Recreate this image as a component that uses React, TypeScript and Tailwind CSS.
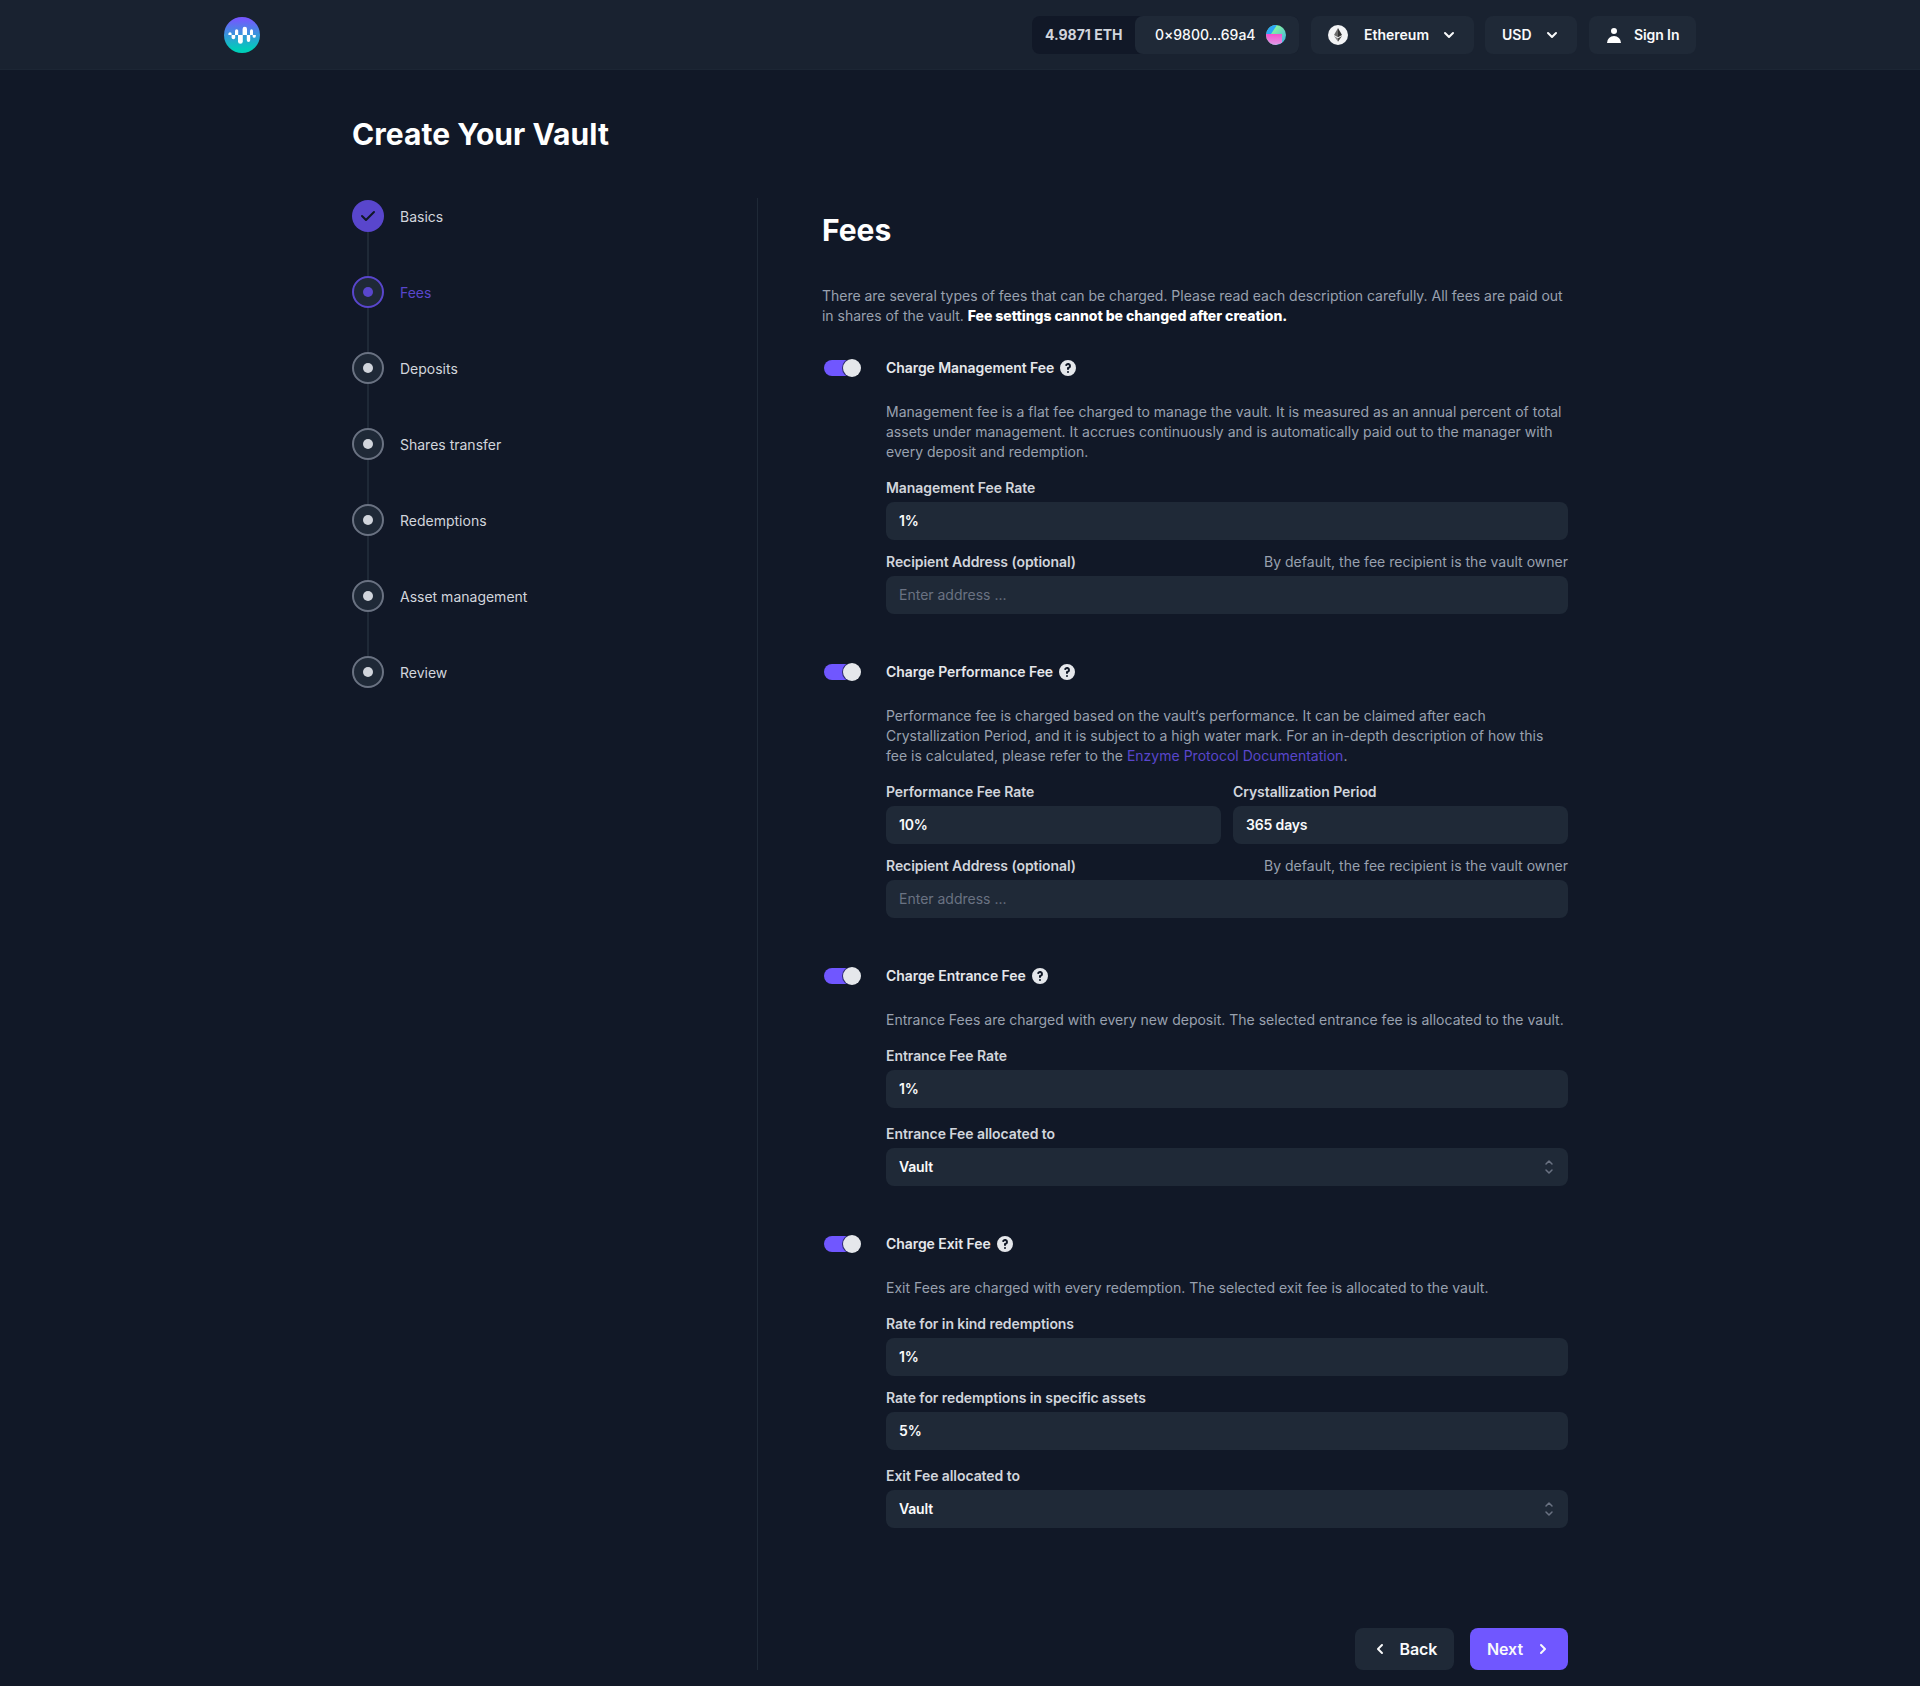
import type { ReactNode } from "react";

const steps = ["Basics", "Fees", "Deposits", "Shares transfer", "Redemptions", "Asset management", "Review"];

function Chevron({ className, d }: { className: string; d: string }) {
  return (
    <svg viewBox="0 0 20 20" fill="currentColor" className={className}>
      <path fillRule="evenodd" clipRule="evenodd" d={d} />
    </svg>
  );
}

const DOWN =
  "M5.293 7.293a1 1 0 011.414 0L10 10.586l3.293-3.293a1 1 0 111.414 1.414l-4 4a1 1 0 01-1.414 0l-4-4a1 1 0 010-1.414z";
const LEFT =
  "M12.707 5.293a1 1 0 010 1.414L9.414 10l3.293 3.293a1 1 0 01-1.414 1.414l-4-4a1 1 0 010-1.414l4-4a1 1 0 011.414 0z";
const RIGHT =
  "M7.293 14.707a1 1 0 010-1.414L10.586 10 7.293 6.707a1 1 0 011.414-1.414l4 4a1 1 0 010 1.414l-4 4a1 1 0 01-1.414 0z";
const CHECK =
  "M16.707 5.293a1 1 0 010 1.414l-8 8a1 1 0 01-1.414 0l-4-4a1 1 0 011.414-1.414L8 12.586l7.293-7.293a1 1 0 011.414 0z";
const HELP =
  "M18 10a8 8 0 11-16 0 8 8 0 0116 0zm-8-3a1 1 0 00-.867.5 1 1 0 11-1.731-1A3 3 0 0113 8a3.001 3.001 0 01-2 2.83V11a1 1 0 11-2 0v-1a1 1 0 011-1 1 1 0 100-2zm0 8a1 1 0 100-2 1 1 0 000 2z";

function Logo() {
  return (
    <svg viewBox="0 0 36 36" className="h-9 w-9">
      <defs>
        <linearGradient id="logo" x1="0" y1="0" x2="0" y2="1">
          <stop offset="0.05" stopColor="#7558ff" />
          <stop offset="0.9" stopColor="#00cdb9" />
        </linearGradient>
      </defs>
      <circle cx="18" cy="18" r="18" fill="url(#logo)" />
      <g fill="#fff">
        <path d="M4.4 18v-1.2a1.6 1.6 0 013.2 0V18z" />
        <path d="M7.6 18h3.6v2.4a1.8 1.8 0 01-3.6 0z" />
        <path d="M11 18v-4.2a1.6 1.6 0 013.2 0V18z" />
        <path d="M14 18h4.8v6.4a2.4 2.4 0 01-4.8 0z" />
        <path d="M18.6 18v-6a2.2 2.2 0 014.4 0v6z" />
        <path d="M22.8 18h3.4v5.2a1.7 1.7 0 01-3.4 0z" />
        <path d="M26 18v-4.3a1.5 1.5 0 013 0V18z" />
        <path d="M28.6 18h3.2v1.2a1.6 1.6 0 01-3.2 0z" />
      </g>
    </svg>
  );
}

function Avatar() {
  return (
    <svg viewBox="0 0 20 20" className="ml-[11px] h-5 w-5">
      <defs>
        <clipPath id="avatar">
          <circle cx="10" cy="10" r="10" />
        </clipPath>
        <linearGradient id="mint" x1="0" y1="0" x2="1" y2="1">
          <stop offset="0.3" stopColor="#86f3a0" />
          <stop offset="0.9" stopColor="#41b4e0" />
        </linearGradient>
        <linearGradient id="pink" x1="0" y1="0" x2="0" y2="1">
          <stop offset="0" stopColor="#f750cf" />
          <stop offset="1" stopColor="#dc9ae6" />
        </linearGradient>
      </defs>
      <g clipPath="url(#avatar)">
        <rect width="20" height="20" fill="url(#mint)" />
        <path d="M0 0h11L5 9H0z" fill="#2ba6f7" />
        <path d="M0 9h16v9l-6 2H0z" fill="url(#pink)" />
      </g>
    </svg>
  );
}

function EthIcon() {
  return (
    <svg viewBox="0 0 20 20" className="h-5 w-5">
      <circle cx="10" cy="10" r="10" fill="#f3f4f6" />
      <path d="M10 3L6 10.1l4 2.2z" fill="#6b6b6b" />
      <path d="M10 3l4 7.1-4 2.2z" fill="#343434" />
      <path d="M6 11l4 5.8v-3.5z" fill="#8c8c8c" />
      <path d="M14 11l-4 5.8v-3.5z" fill="#4a4a4a" />
    </svg>
  );
}

function Header() {
  const button = "flex h-[38px] items-center rounded-lg bg-[#1f2937] text-sm font-semibold text-gray-50";
  return (
    <header className="flex h-[70px] items-center justify-between border-b border-[#1f2937]/50 bg-[#192230] pr-56 pl-56">
      <Logo />
      <div className="flex text-sm">
        <div className="flex h-[38px] w-[267px] items-center rounded-lg bg-[#111827]">
          <span className="w-[103px] pl-[13px] font-bold text-gray-300">4.9871 ETH</span>
          <button className="flex h-[38px] w-[164px] items-center rounded-lg bg-[#1f2937] pl-5 font-medium tracking-[-0.03px] text-gray-50">
            0×9800...69a4
            <Avatar />
          </button>
        </div>
        <button className={`${button} ml-3 w-[163px] pl-[17px]`}>
          <EthIcon />
          <span className="ml-4">Ethereum</span>
          <Chevron className="ml-2.5 h-5 w-5" d={DOWN} />
        </button>
        <button className={`${button} ml-[11px] w-[92px] pl-[17px]`}>
          USD
          <Chevron className="ml-2.5 h-5 w-5" d={DOWN} />
        </button>
        <button className={`${button} ml-3 w-[107px] pl-[15px]`}>
          <svg viewBox="0 0 20 20" fill="currentColor" className="h-5 w-5 text-white">
            <path d="M10 9a3 3 0 100-6 3 3 0 000 6zm-7 9a7 7 0 1114 0H3z" />
          </svg>
          <span className="ml-2.5 tracking-[-0.1px]">Sign In</span>
        </button>
      </div>
    </header>
  );
}

function Stepper() {
  return (
    <ol className="w-[406px] shrink-0 border-r border-[#1f2937] pt-0.5">
      {steps.map((label, i) => (
        <li key={label} className="flex h-[76px] gap-4">
          <div className="flex w-8 flex-col items-center">
            {i === 0 ? (
              <span className="flex h-8 w-8 shrink-0 items-center justify-center rounded-full bg-[#5946cc] text-[#111827]">
                <Chevron className="h-5 w-5" d={CHECK} />
              </span>
            ) : (
              <span
                className={`flex h-8 w-8 shrink-0 items-center justify-center rounded-full border-2 bg-[#1f2937] ${
                  i === 1 ? "border-[#5946cc]" : "border-gray-500"
                }`}
              >
                <span className={`h-2.5 w-2.5 rounded-full ${i === 1 ? "bg-[#5946cc]" : "bg-gray-300"}`} />
              </span>
            )}
            {i < steps.length - 1 && <span className="w-0.5 grow bg-[#1f2937]" />}
          </div>
          <span className={`mt-[7px] text-sm ${i === 1 ? "text-[#5946cc]" : "text-gray-300"}`}>{label}</span>
        </li>
      ))}
    </ol>
  );
}

function Section({ title, description, children }: { title: string; description: ReactNode; children: ReactNode }) {
  return (
    <section className="mb-12">
      <div className="flex h-5 items-center">
        <div className="ml-0.5 flex h-4 w-9 items-center rounded-full bg-[#7057ff]">
          <span className="ml-[19px] h-[18px] w-[18px] shrink-0 rounded-full bg-gray-200 ring-1 ring-[#111827]/70" />
        </div>
        <h3 className="ml-[26px] text-sm font-semibold tracking-[-0.07px] text-gray-200">{title}</h3>
        <Chevron className="ml-1 h-5 w-5 text-gray-200" d={HELP} />
      </div>
      <div className="pl-16">
        <p className="mt-6 mb-4 text-sm tracking-[0.01px] text-gray-400">{description}</p>
        {children}
      </div>
    </section>
  );
}

function Field({ label, value, hint, select }: { label: string; value?: string; hint?: boolean; select?: boolean }) {
  return (
    <div className="min-w-0 flex-1">
      <div className="mb-1 flex justify-between text-sm">
        <span className="font-semibold tracking-[-0.07px] text-gray-300">{label}</span>
        {hint && <span className="tracking-[0.01px] text-gray-400">By default, the fee recipient is the vault owner</span>}
      </div>
      <div className="flex h-[38px] items-center justify-between rounded-lg bg-[#1f2937] px-[13px] text-sm">
        {value ? (
          <span className="font-semibold tracking-[-0.16px] text-gray-50">{value}</span>
        ) : (
          <span className="text-gray-500">Enter address ...</span>
        )}
        {select && (
          <svg viewBox="0 0 20 20" fill="none" stroke="currentColor" strokeWidth="1.5" className="-mr-1 h-5 w-5 text-gray-500">
            <path d="M7 7l3-3 3 3m0 6l-3 3-3-3" strokeLinecap="round" strokeLinejoin="round" />
          </svg>
        )}
      </div>
    </div>
  );
}

export default function App() {
  return (
    <div className="min-h-[1686px] bg-[#111827] font-['Inter',sans-serif] text-gray-300">
      <Header />
      <main className="ml-[352px] w-[1216px] pt-[46px]">
        <h1 className="text-3xl font-bold tracking-[0.04px] text-white">Create Your Vault</h1>
        <div className="mt-[46px] flex h-[1472px]">
          <Stepper />
          <div className="ml-16 flex w-[746px] flex-col pt-3.5">
            <h2 className="text-3xl font-bold text-white">Fees</h2>
            <p className="mt-[38px] mb-8 text-sm tracking-[-0.02px] text-gray-400">
              There are several types of fees that can be charged. Please read each description carefully. All fees are paid out
              in shares of the vault.{" "}
              <strong className="font-extrabold tracking-[-0.04px] text-white">Fee settings cannot be changed after creation.</strong>
            </p>
            <Section
              title="Charge Management Fee"
              description="Management fee is a flat fee charged to manage the vault. It is measured as an annual percent of total assets under management. It accrues continuously and is automatically paid out to the manager with every deposit and redemption."
            >
              <div className="flex flex-col gap-3">
                <Field label="Management Fee Rate" value="1%" />
                <Field label="Recipient Address (optional)" hint />
              </div>
            </Section>
            <Section
              title="Charge Performance Fee"
              description={
                <>
                  <span className="tracking-[-0.02px]">
                    Performance fee is charged based on the vault‘s performance. It can be claimed after each
                  </span>{" "}
                  Crystallization Period, and it is subject to a high water mark. For an in-depth description of how this
                  fee&nbsp;is calculated, please refer to the <a className="text-[#5946cc]">Enzyme Protocol Documentation</a>.
                </>
              }
            >
              <div className="flex flex-col gap-3">
                <div className="flex gap-3">
                  <Field label="Performance Fee Rate" value="10%" />
                  <Field label="Crystallization Period" value="365 days" />
                </div>
                <Field label="Recipient Address (optional)" hint />
              </div>
            </Section>
            <Section
              title="Charge Entrance Fee"
              description="Entrance Fees are charged with every new deposit. The selected entrance fee is allocated to the vault."
            >
              <div className="flex flex-col gap-4">
                <Field label="Entrance Fee Rate" value="1%" />
                <Field label="Entrance Fee allocated to" value="Vault" select />
              </div>
            </Section>
            <Section
              title="Charge Exit Fee"
              description="Exit Fees are charged with every redemption. The selected exit fee is allocated to the vault."
            >
              <div className="flex flex-col gap-3">
                <Field label="Rate for in kind redemptions" value="1%" />
                <Field label="Rate for redemptions in specific assets" value="5%" />
                <div className="mt-1 flex">
                  <Field label="Exit Fee allocated to" value="Vault" select />
                </div>
              </div>
            </Section>
            <div className="mt-auto flex justify-end gap-4 font-semibold tracking-[-0.08px] text-gray-50">
              <button className="flex h-[42px] w-[99px] items-center rounded-lg bg-[#1f2937] pl-[15px]">
                <Chevron className="h-5 w-5" d={LEFT} />
                <span className="ml-[9.5px]">Back</span>
              </button>
              <button className="flex h-[42px] w-[98px] items-center rounded-lg bg-[#7057ff] pl-[17px]">
                Next
                <Chevron className="ml-2.5 h-5 w-5" d={RIGHT} />
              </button>
            </div>
          </div>
        </div>
      </main>
    </div>
  );
}
